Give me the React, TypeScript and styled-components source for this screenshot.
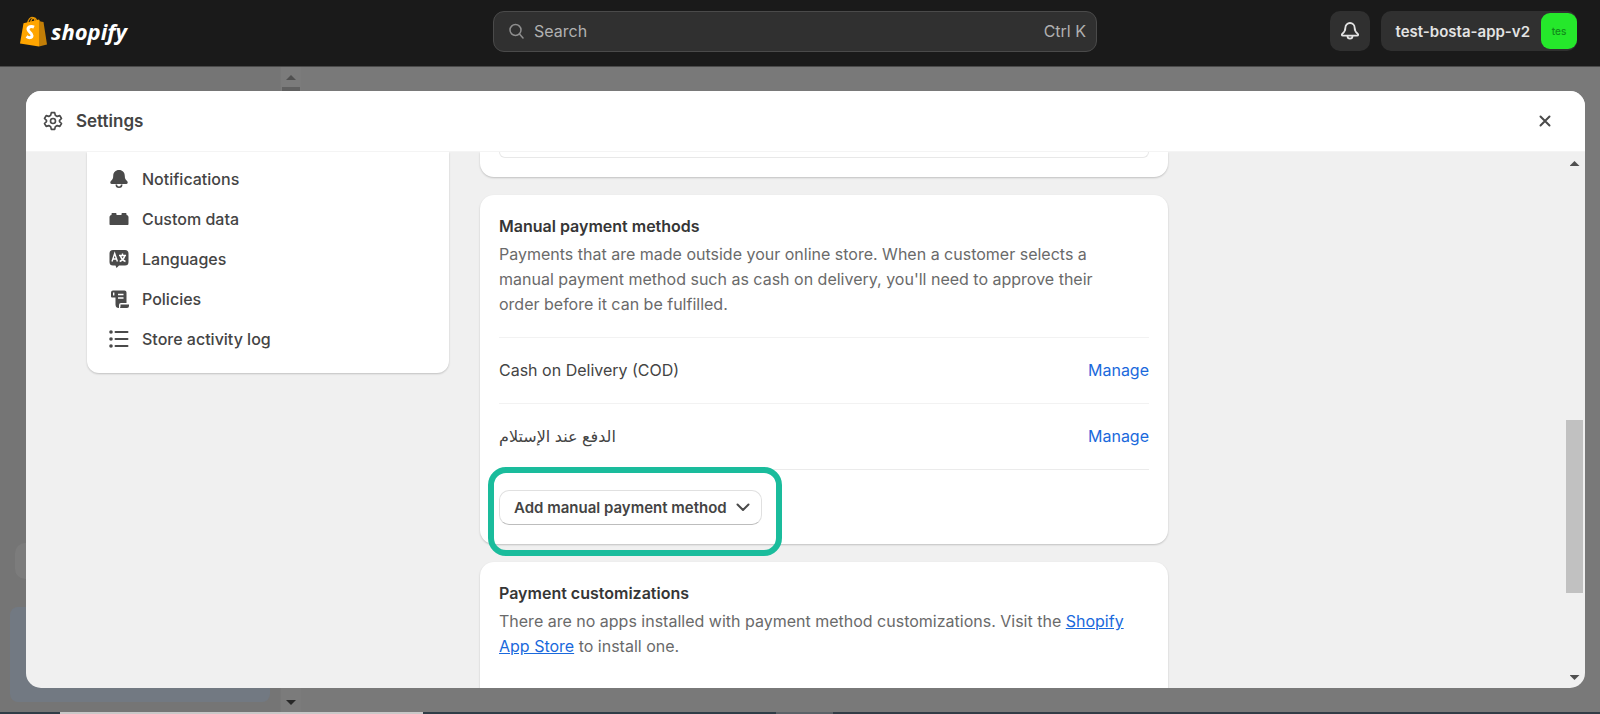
import React from 'react';
import styled, { createGlobalStyle } from 'styled-components';

const GlobalStyle = createGlobalStyle`
  *, *::before, *::after { box-sizing: border-box; }
  body { margin: 0; background: #797979; font-family: Inter, "Noto Sans", "DejaVu Sans", sans-serif; font-size: 16px; line-height: 25px; color: #444; }
  button, input { font: inherit; }
  h1, h2, p, ul { margin: 0; padding: 0; }
`;

const Page = styled.div`
  height: 100vh;
  display: flex;
  flex-direction: column;
  overflow: hidden;
`;

const TopBar = styled.header`
  flex: none;
  height: 67px;
  padding: 0 23px 4px 13px;
  display: grid;
  grid-template-columns: 1fr 604px 1fr;
  align-items: center;
  background: #1a1a1a;
  border-bottom: 1px solid #4a4a4a;
`;

const Brand = styled.a`
  display: flex;
  align-items: center;
  gap: 4px;
  width: max-content;
  padding-left: 7px;
  color: #fff;
  text-decoration: none;
  font: italic 700 22px/30px "Open Sans", sans-serif;
`;

const SearchBox = styled.label`
  display: flex;
  align-items: center;
  gap: 10px;
  height: 41px;
  padding: 0 10px 0 15px;
  border: 1px solid #4a4a4a;
  border-radius: 11px;
  background: #303030;
  color: #b0b0b0;
`;

const SearchInput = styled.input`
  flex: 1;
  min-width: 0;
  padding: 0;
  border: 0;
  outline: 0;
  background: none;
  color: inherit;
  &::placeholder { color: inherit; opacity: 1; }
`;

const Account = styled.div`
  display: flex;
  justify-content: flex-end;
  gap: 11px;
`;

const BellButton = styled.button`
  width: 40px;
  height: 40px;
  padding: 0;
  display: grid;
  place-items: center;
  border: 0;
  border-radius: 10px;
  background: #303030;
  color: #e3e3e3;
`;

const StoreButton = styled.button`
  display: flex;
  align-items: center;
  gap: 11px;
  height: 40px;
  padding: 0 0 0 15px;
  border: 0;
  border-radius: 10px;
  background: #303030;
  color: #e3e3e3;
  font-size: 15px;
  font-weight: 600;
`;

const Avatar = styled.span`
  display: grid;
  place-items: center;
  width: 36px;
  height: 36px;
  border-radius: 9px;
  background: #25e82b;
  color: #128a1a;
  font-size: 10px;
  font-weight: 500;
`;

const Backdrop = styled.main`
  position: relative;
  flex: 1;
  min-height: 0;
  padding: 24px 15px 24px 26px;
  display: flex;
`;

const DimmedNav = styled.div`
  position: absolute;
  inset: 0 auto 0 0;
  width: 281px;
  background: #757575;
  border-right: 1px solid #777;
`;

const DimmedItem = styled.div`
  position: absolute;
  left: 15px;
  right: 15px;
  bottom: 133px;
  height: 36px;
  border-radius: 10px;
  background: #7c7c7c;
`;

const DimmedNotice = styled.div`
  position: absolute;
  left: 10px;
  right: 10px;
  bottom: 10px;
  height: 95px;
  border-radius: 8px;
  background: #727982;
`;

const DimmedRail = styled.div`
  position: absolute;
  inset: 0 auto 0 281px;
  width: 20px;
  padding: 8px 2px 7px;
  display: flex;
  flex-direction: column;
  align-items: center;
  background: #7b7b7b;
`;

const DimmedThumb = styled.span`
  width: 18px;
  height: 120px;
  margin: 7px 0 auto;
  background: #606060;
`;

const Dialog = styled.section`
  position: relative;
  flex: 1;
  min-width: 0;
  display: flex;
  flex-direction: column;
  overflow: hidden;
  border-radius: 15px;
  background: #f0f0f0;
`;

const DialogHeader = styled.div`
  flex: none;
  display: flex;
  align-items: center;
  gap: 13px;
  height: 61px;
  padding: 0 29px 0 17px;
  background: #fff;
  border-bottom: 1px solid #f4f4f4;
`;

const DialogTitle = styled.h1`
  flex: 1;
  font-size: 17px;
  font-weight: 600;
`;

const CloseButton = styled.button`
  width: 22px;
  height: 22px;
  padding: 0;
  display: grid;
  place-items: center;
  border: 0;
  background: none;
  color: #4a4a4a;
`;

const DialogBody = styled.div`
  flex: 1;
  min-height: 0;
  display: flex;
`;

const Content = styled.div`
  flex: 1;
  min-width: 0;
  display: grid;
  grid-template-columns: 362px minmax(0, 688px);
  align-items: start;
  gap: 31px;
  padding: 0 61px;
  overflow: hidden;
`;

const cardShadow = '0 1px 2px rgba(0, 0, 0, 0.2)';

const SideNav = styled.nav`
  padding: 7px 13px 14px;
  border-radius: 0 0 12px 12px;
  background: #fff;
  box-shadow: ${cardShadow};
`;

const NavList = styled.ul`
  list-style: none;
`;

const NavLink = styled.a`
  display: flex;
  align-items: center;
  gap: 13px;
  height: 40px;
  padding: 0 9px;
  color: #444;
  font-weight: 500;
  text-decoration: none;
`;

const Column = styled.div`
  display: flex;
  flex-direction: column;
  gap: 18px;
`;

const Card = styled.section`
  padding: 19px;
  border-radius: 14px;
  background: #fff;
  box-shadow: ${cardShadow};
  &:last-child { padding-bottom: 60px; }
`;

const PreviousCard = styled(Card)`
  height: 25px;
  padding: 0 19px;
  border-radius: 0 0 14px 14px;
`;

const PreviousPanel = styled.div`
  height: 6px;
  border: 1px solid #e8e8e8;
  border-top: 0;
  border-radius: 0 0 10px 10px;
`;

const CardTitle = styled.h2`
  color: #363636;
  font-size: 16px;
  line-height: 25px;
  font-weight: 600;
`;

const CardText = styled.p`
  max-width: 630px;
  padding-top: 3px;
  color: #6a6a6a;
`;

const TextLink = styled.a`
  color: #1a69dc;
  text-decoration: underline;
`;

const MethodList = styled.ul`
  margin-top: 20px;
  list-style: none;
`;

const MethodRow = styled.li`
  display: flex;
  align-items: center;
  justify-content: space-between;
  height: 66px;
  border-top: 1px solid #f2f2f2;
  &:last-child { height: 67px; border-bottom: 1px solid #ebebeb; }
`;

const ManageLink = styled.a`
  color: #1a69dc;
  text-decoration: none;
`;

const AddMethod = styled.div`
  position: relative;
  display: flex;
  width: max-content;
  margin-top: 20px;
`;

const AddButton = styled.button`
  display: flex;
  align-items: center;
  gap: 9px;
  height: 35px;
  padding: 0 11px 0 14px;
  border: 1px solid #e0e0e0;
  border-bottom-color: #bdbdbd;
  border-radius: 10px;
  background: #fff;
  color: #444;
  font-size: 15px;
  font-weight: 600;
`;

const Highlight = styled.span`
  position: absolute;
  inset: -23px -20px -31px -11px;
  border: 6px solid #1abc9c;
  border-radius: 18px;
  pointer-events: none;
`;

const ScrollRail = styled.div`
  flex: none;
  width: 19px;
  padding: 9px 2px 8px 0;
  display: flex;
  flex-direction: column;
  align-items: center;
`;

const ScrollThumb = styled.span`
  width: 17px;
  height: 173px;
  margin-top: 254px;
  margin-bottom: auto;
  background: #c1c1c1;
`;

const Arrow = styled.span<{ $down?: boolean; $tone: string }>`
  width: 10px;
  height: 5px;
  background: ${(p) => p.$tone};
  clip-path: ${(p) => (p.$down ? 'polygon(0 0, 100% 0, 50% 100%)' : 'polygon(50% 0, 100% 100%, 0 100%)')};
`;

const BottomEdge = styled.footer`
  flex: none;
  display: flex;
  height: 2px;
  background: #323c46;
`;

const EdgeSegment = styled.span<{ $width: number; $tone: string }>`
  width: ${(p) => p.$width}px;
  background: ${(p) => p.$tone};
`;

const BagLogo = () => (
  <svg width="27" height="31" viewBox="0 0 27 31" aria-hidden="true">
    <path d="M7.500 8C8 3.500 10.500 1 12.500 1.500c2 .4 2.500 2 2.500 5M10.500 7c.5-3 2-5 3.500-5s2.500 1.500 3 4" fill="none" stroke="#e69500" strokeWidth="1.300" />
    <path d="M3.500 7.200L19 3.500V30.500L0 27.500z" fill="#ffa500" />
    <path d="M19 3.500l1.500 2 3 .5 3.500 22.500-8 2z" fill="#c27e07" />
    <path d="M14 11.200c-2.500-1.200-6-.6-6 2.100 0 2.900 4 3.200 4 6.200 0 2.600-3 2.700-5.500 1" fill="none" stroke="#fff" strokeWidth="3" />
  </svg>
);

const SearchIcon = () => (
  <svg width="15" height="16" viewBox="0 0 15 16" fill="none" stroke="#8e8e8e" strokeWidth="1.500" strokeLinecap="round" aria-hidden="true">
    <circle cx="6.500" cy="7" r="5.500" />
    <path d="M10.500 11l3.500 4" />
  </svg>
);

const BellIcon = () => (
  <svg width="20" height="20" viewBox="0 0 20 20" fill="none" stroke="currentColor" strokeWidth="1.800" strokeLinejoin="round" aria-hidden="true">
    <path d="M10 2a4.600 4.600 0 0 0-4.600 4.600c0 3.200-1 4.600-3 6.100-1 .8-.7 1.900.5 1.900h14.200c1.200 0 1.500-1.100.5-1.900-2-1.500-3-2.900-3-6.100A4.600 4.600 0 0 0 10 2z" />
    <path d="M7.500 15a2.500 2.700 0 0 0 5 0" />
  </svg>
);

const GearIcon = () => (
  <svg width="20" height="20" viewBox="0 0 24 24" fill="none" stroke="#4a4a4a" strokeWidth="2" strokeLinejoin="round" aria-hidden="true">
    <path d="M10 2h4l.8 3.200 2.200 1.300 3.200-1 2 3.500-2.400 2.300v1.400l2.400 2.300-2 3.500-3.200-1-2.200 1.300L14 22h-4l-.8-3.200L7 17.500l-3.200 1-2-3.500 2.400-2.300v-1.400L1.800 9l2-3.500 3.200 1 2.200-1.300z" />
    <circle cx="12" cy="12" r="3" />
  </svg>
);

const CloseIcon = () => (
  <svg width="12" height="12" viewBox="0 0 12 12" stroke="currentColor" strokeWidth="2" strokeLinecap="round" aria-hidden="true">
    <path d="M1.500 1.500l9 9M10.500 1.500l-9 9" />
  </svg>
);

const NavIcon = ({ children }: { children: React.ReactNode }) => (
  <svg width="20" height="20" viewBox="0 0 20 20" fill="#4a4a4a" aria-hidden="true">{children}</svg>
);

const navItems = [
  {
    label: 'Notifications',
    icon: (
      <NavIcon>
        <path d="M10 1C6.500 1 4.200 3.500 4.200 7c0 2.500-.8 3.700-2.300 5-1.200 1.100-.6 3 .9 3h14.400c1.500 0 2.100-1.900.9-3-1.500-1.300-2.300-2.500-2.300-5 0-3.500-2.300-6-5.800-6z" />
        <path d="M7.300 15.500a2.700 2.700 0 0 0 5.400 0" fill="none" stroke="#4a4a4a" strokeWidth="1.600" />
      </NavIcon>
    ),
  },
  {
    label: 'Custom data',
    icon: (
      <NavIcon>
        <path d="M2.500 6V5c0-.6.400-1 1-1h3c.6 0 1 .4 1 1v1h5V5c0-.6.400-1 1-1h3c.6 0 1 .4 1 1v1c1.300.2 2 1 2 2.200V15c0 .6-.4 1-1 1H1.500c-.6 0-1-.4-1-1V8.200C.5 7 1.200 6.200 2.500 6z" />
      </NavIcon>
    ),
  },
  {
    label: 'Languages',
    icon: (
      <NavIcon>
        <path d="M4 1h12a3.500 3.500 0 0 1 3.500 3.500v8.500A3.500 3.500 0 0 1 16 16.500h-6L7.500 19 6.500 16.500H4A3.500 3.500 0 0 1 .5 13V4.500A3.500 3.500 0 0 1 4 1z" />
        <path d="M3 12.500l2.700-8 2.700 8M4 10h3.500M10 6.500h7M13.500 4.500v2M11.500 7c.7 2.500 2.500 4.500 5 5.500M15.700 7c-.7 2.500-2.500 4.500-5 5.500" fill="none" stroke="#fff" strokeWidth="1.400" />
      </NavIcon>
    ),
  },
  {
    label: 'Policies',
    icon: (
      <NavIcon>
        <path d="M4 1.500h11.500a2 2 0 0 1 2 2V14H12a2 2 0 0 0-2 2v3a3.500 3.500 0 0 1-3.500-3.500V8.500H3a1 1 0 0 1-1-1v-4a2 2 0 0 1 2-2z" />
        <path d="M11.500 15.500H20V17a2 2 0 0 1-2 2h-7c.5-.8.500-1.700.5-3.500z" />
        <path d="M4.700 3.500v3M9 5.500h5.500M9 9h5.500" stroke="#fff" strokeWidth="1.400" fill="none" />
      </NavIcon>
    ),
  },
  {
    label: 'Store activity log',
    icon: (
      <NavIcon>
        <circle cx="2" cy="3" r="1.800" />
        <circle cx="2" cy="10" r="1.800" />
        <circle cx="2" cy="17" r="1.800" />
        <path d="M6.500 3h12M6.500 10h12M6.500 17h12" stroke="#4a4a4a" strokeWidth="2" strokeLinecap="round" />
      </NavIcon>
    ),
  },
];

const methods = ['Cash on Delivery (COD)', 'الدفع عند الإستلام'];

export default function App() {
  return (
    <Page>
      <GlobalStyle />
      <TopBar>
        <Brand href="#"><BagLogo />shopify</Brand>
        <SearchBox>
          <SearchIcon />
          <SearchInput type="text" placeholder="Search" aria-label="Search" />
          <span>Ctrl K</span>
        </SearchBox>
        <Account>
          <BellButton aria-label="Notifications"><BellIcon /></BellButton>
          <StoreButton>test-bosta-app-v2<Avatar>tes</Avatar></StoreButton>
        </Account>
      </TopBar>
      <Backdrop>
        <DimmedNav>
          <DimmedItem />
          <DimmedNotice />
        </DimmedNav>
        <DimmedRail>
          <Arrow $tone="#505050" />
          <DimmedThumb />
          <Arrow $tone="#282828" $down />
        </DimmedRail>
        <Dialog role="dialog" aria-labelledby="settings-title">
          <DialogHeader>
            <GearIcon />
            <DialogTitle id="settings-title">Settings</DialogTitle>
            <CloseButton aria-label="Close"><CloseIcon /></CloseButton>
          </DialogHeader>
          <DialogBody>
            <Content>
              <SideNav aria-label="Settings">
                <NavList>
                  {navItems.map((item) => (
                    <li key={item.label}><NavLink href="#">{item.icon}{item.label}</NavLink></li>
                  ))}
                </NavList>
              </SideNav>
              <Column>
                <PreviousCard><PreviousPanel /></PreviousCard>
                <Card>
                  <CardTitle>Manual payment methods</CardTitle>
                  <CardText>
                    Payments that are made outside your online store. When a customer selects a manual
                    payment method such as cash on delivery, you'll need to approve their order before it can
                    be fulfilled.
                  </CardText>
                  <MethodList>
                    {methods.map((name) => (
                      <MethodRow key={name}>
                        <span>{name}</span>
                        <ManageLink href="#" aria-label={`Manage ${name}`}>Manage</ManageLink>
                      </MethodRow>
                    ))}
                  </MethodList>
                  <AddMethod>
                    <AddButton>
                      Add manual payment method
                      <svg width="14" height="9" viewBox="0 0 14 9" fill="none" stroke="#4a4a4a" strokeWidth="2" strokeLinecap="round" strokeLinejoin="round" aria-hidden="true">
                        <path d="M1.500 1.500L7 7l5.500-5.500" />
                      </svg>
                    </AddButton>
                    <Highlight />
                  </AddMethod>
                </Card>
                <Card>
                  <CardTitle>Payment customizations</CardTitle>
                  <CardText>
                    There are no apps installed with payment method customizations. Visit the{' '}
                    <TextLink href="#">Shopify App Store</TextLink> to install one.
                  </CardText>
                </Card>
              </Column>
            </Content>
            <ScrollRail>
              <Arrow $tone="#505050" />
              <ScrollThumb />
              <Arrow $tone="#505050" $down />
            </ScrollRail>
          </DialogBody>
        </Dialog>
      </Backdrop>
      <BottomEdge>
        <EdgeSegment $width={60} $tone="#2f3d47" />
        <EdgeSegment $width={363} $tone="#c8c8c8" />
        <EdgeSegment $width={353} $tone="#2f3d47" />
        <EdgeSegment $width={57} $tone="#5c6268" />
      </BottomEdge>
    </Page>
  );
}
